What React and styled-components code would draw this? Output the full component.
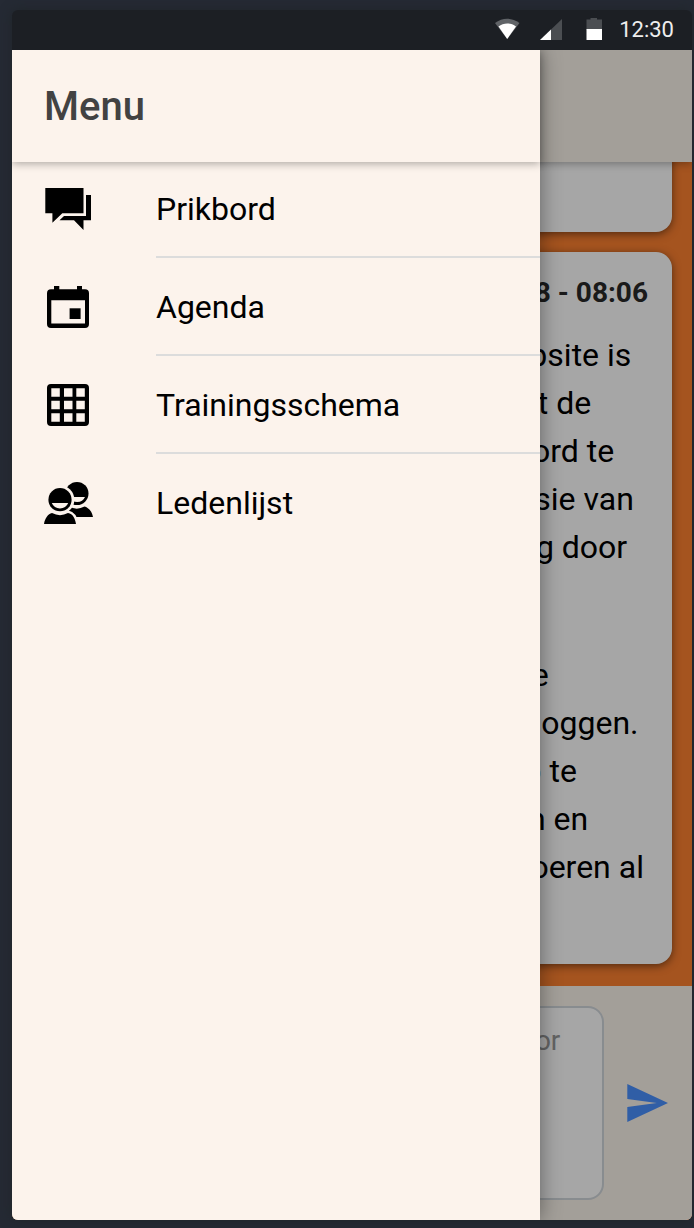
import React from "react";
import styled, { createGlobalStyle } from "styled-components";

const GlobalStyle = createGlobalStyle`
  *, *::before, *::after { box-sizing: border-box; }
  body {
    margin: 0;
    background: #252a34;
    font-family: Roboto, "Liberation Sans", sans-serif;
    color: #000;
  }
`;

const Page = styled.div`
  display: flex;
  height: 100vh;
  padding: 10px 2px 8px 12px;
`;

const Phone = styled.div`
  flex: 1;
  min-width: 0;
  display: flex;
  flex-direction: column;
  overflow: hidden;
  border-radius: 6px;
  box-shadow: 0 0 12px rgba(30, 36, 38, 0.8);
`;

const StatusBar = styled.header`
  flex: none;
  display: flex;
  align-items: center;
  justify-content: flex-end;
  height: 40px;
  padding-right: 18px;
  background: #1c1f24;
  color: #eee;
  font-size: 22px;
  line-height: 40px;
`;

const StatusIcons = styled.svg`
  margin-right: 16px;
`;

const Screen = styled.div`
  position: relative;
  flex: 1;
  min-height: 0;
  display: flex;
  flex-direction: column;
  overflow: hidden;
  background: #fd8130;
`;

const AppBar = styled.div`
  flex: none;
  display: flex;
  align-items: center;
  position: relative;
  z-index: 1;
  height: 112px;
  padding: 2px 32px 0;
  background: ${(p) => p.$color};
  box-shadow: 0 2px 8px rgba(0, 0, 0, 0.3);
`;

const Title = styled.h1`
  margin: 0;
  font-size: 40px;
  font-weight: 500;
  line-height: 48px;
  color: #424242;
`;

const Feed = styled.main`
  flex: 1;
  min-height: 0;
  display: flex;
  flex-direction: column;
  justify-content: flex-end;
  gap: 20px;
  padding: 0 20px 22px;
  overflow: hidden;
`;

const Card = styled.article`
  flex: none;
  display: flex;
  flex-direction: column;
  gap: 21px;
  padding: 24px 24px 25px;
  border-radius: 16px;
  background: #fff;
  box-shadow: 0 2px 8px rgba(0, 0, 0, 0.5);
`;

const CardDate = styled.time`
  font-size: 28px;
  font-weight: 700;
  line-height: 34px;
  text-align: right;
  color: #282828;
`;

const CardText = styled.div`
  display: flex;
  flex-direction: column;
  gap: 32px;
  font-size: 32px;
  line-height: 48px;
`;

const Paragraph = styled.p`
  margin: 0;
  white-space: pre;
`;

const Composer = styled.form`
  flex: none;
  display: flex;
  align-items: center;
  gap: 22px;
  padding: 20px 24px 20px 20px;
  background: #fbf4eb;
`;

const MessageBox = styled.textarea`
  flex: 1;
  min-width: 0;
  height: 194px;
  padding: 16px 24px;
  border: 2px solid #d2d7dc;
  border-radius: 16px;
  background: #fff;
  resize: none;
  overflow: hidden;
  font-family: inherit;
  font-size: 28px;
  line-height: 34px;

  &::placeholder {
    color: #999;
    opacity: 1;
  }
`;

const SendButton = styled.button`
  flex: none;
  display: flex;
  padding: 0;
  border: 0;
  background: none;
  color: #4b91ff;
  cursor: pointer;
`;

const Scrim = styled.div`
  position: absolute;
  inset: 0;
  z-index: 2;
  background: rgba(0, 0, 0, 0.35);
`;

const Drawer = styled.aside`
  position: absolute;
  top: 0;
  bottom: 0;
  left: 0;
  z-index: 3;
  width: 528px;
  max-width: 100%;
  background: #fcf3ec;
  box-shadow: 0 0 20px rgba(0, 0, 0, 0.42);
`;

const MenuList = styled.ul`
  margin: -2px 0 0;
  padding: 0;
  list-style: none;
`;

const MenuLink = styled.a`
  display: flex;
  align-items: center;
  gap: 60px;
  padding-left: 28px;
  color: #000;
  font-size: 32px;
  line-height: 98px;
  text-decoration: none;

  svg {
    flex: none;
  }
`;

const MenuLabel = styled.span`
  flex: 1;
  box-shadow: inset 0 -2px #dcdcdc;

  li:last-child & {
    box-shadow: none;
  }
`;

const ChatIcon = () => (
  <svg width="56" height="56" viewBox="0 0 56 56" aria-hidden="true">
    <path d="M5.3 7H43.5V32.2H22.3L12.4 41.7V32.2H5.3Z" />
    <path d="M46 14H51V39.2H43.5V49L34 39.2H19.5L24 35H46Z" />
  </svg>
);

const CalendarIcon = () => (
  <svg width="56" height="56" viewBox="0 0 56 56" aria-hidden="true">
    <path
      fillRule="evenodd"
      d="M14 7h5.300v3.300h17.700v-3.300h5v3.300h3a4 4 0 0 1 4 4v30.700a4 4 0 0 1-4 4H11a4 4 0 0 1-4-4V14.300a4 4 0 0 1 4-4h3zM11.300 21.200V44.500H45V21.200z"
    />
    <path d="M29.600 29.300h11v10.700H29.600z" />
  </svg>
);

const GridIcon = () => (
  <svg width="56" height="56" viewBox="0 0 56 56" aria-hidden="true">
    <path
      fillRule="evenodd"
      d="M11 7H45a4 4 0 0 1 4 4V45a4 4 0 0 1-4 4H11a4 4 0 0 1-4-4V11a4 4 0 0 1 4-4z
      M11.300 11.300v8.500h8.500v-8.500z M24 11.300v8.500h8.500v-8.500z M36.300 11.300v8.500h8.500v-8.500z
      M11.300 23.800v8.500h8.500v-8.500z M24 23.800v8.500h8.500v-8.500z M36.300 23.800v8.500h8.500v-8.500z
      M11.300 36.300v8.500h8.500v-8.500z M24 36.300v8.500h8.500v-8.500z M36.300 36.300v8.500h8.500v-8.500z"
    />
  </svg>
);

const PeopleIcon = () => (
  <svg width="56" height="56" viewBox="0 0 56 56" aria-hidden="true">
    <circle cx="37" cy="18.500" r="11.500" />
    <path fill="#fcf3ec" d="M29.500 22H45a8.500 8.500 0 0 1-15.500 0z" />
    <path d="M29 31.500a16 16 0 0 0 15.500 0C49.500 33 52 37 53 42H29z" />
    <circle cx="20" cy="24.700" r="14.300" fill="#fcf3ec" />
    <path
      stroke="#fcf3ec"
      strokeWidth="5"
      fill="#fcf3ec"
      d="M4 49c1-6 4-10 8-11a17 17 0 0 0 16 0c5 1 7 5 8 11z"
    />
    <circle cx="20" cy="24.700" r="11.600" />
    <path fill="#fcf3ec" d="M11.800 28H28.200a8.900 8.900 0 0 1-16.400 0z" />
    <path d="M4 49c1-6 4-10 8-11a17 17 0 0 0 16 0c5 1 7 5 8 11z" />
  </svg>
);

const menuItems = [
  { label: "Prikbord", Icon: ChatIcon },
  { label: "Agenda", Icon: CalendarIcon },
  { label: "Trainingsschema", Icon: GridIcon },
  { label: "Ledenlijst", Icon: PeopleIcon },
];

const posts = [
  { id: 1, paragraphs: ["Top!"] },
  {
    id: 2,
    date: "13-01-2018 - 08:06",
    paragraphs: [
      `Beste leden en ouders, de clubwebsite is
aangepast. Via de knop menu gaat de
keuzelijst open, om daar het prikbord te
bekijken. Dit is nu de nieuwste versie van
de website, die nu deze maand nog door
ons getest wordt.`,
      `Een aantal leden kreeg vandaag de
melding dat ze nog niet konden inloggen.
Probeer toch jouw wachtwoord op te
vragen, direct opnieuw in te stellen en
daarna de gegevens verder in te voeren al
is het even zoeken.`,
    ],
  },
];

export default function App() {
  return (
    <>
      <GlobalStyle />
      <Page>
        <Phone>
          <StatusBar>
            <StatusIcons width="108" height="24" viewBox="0 0 108 24" aria-hidden="true">
              <path fill="#606367" d="M0 5C7.500-.7 16.500-.7 24.500 5L12.200 21z" />
              <path fill="#fff" d="M3.500 8.500c5-4 12.500-4 17.500 0L12.200 21z" />
              <path fill="#4b4e52" d="M67 1V22H45z" />
              <path fill="#fff" d="M56 11.500V22H45z" />
              <path fill="#4b4e52" d="M95.500 0h6.500v1.500h5V12H91.500V1.500h4z" />
              <path fill="#fff" d="M91.500 11H107V22H91.500z" />
            </StatusIcons>
            <span>12:30</span>
          </StatusBar>
          <Screen>
            <AppBar $color="#fbf4eb" />
            <Feed>
              {posts.map((post) => (
                <Card key={post.id}>
                  {post.date && <CardDate>{post.date}</CardDate>}
                  <CardText>
                    {post.paragraphs.map((text) => (
                      <Paragraph key={text}>{text}</Paragraph>
                    ))}
                  </CardText>
                </Card>
              ))}
            </Feed>
            <Composer>
              <MessageBox
                aria-label="Bericht"
                placeholder="Geef hier een nieuw prikbordbericht voor alle leden"
              />
              <SendButton type="button" aria-label="Versturen">
                <svg width="42" height="38" viewBox="0 0 42 38" fill="currentColor" aria-hidden="true">
                  <path d="M1.300 0L42 19L1.300 38V23L30.700 19L1.300 15z" />
                </svg>
              </SendButton>
            </Composer>
            <Scrim />
            <Drawer>
              <AppBar $color="#fcf3ec">
                <Title>Menu</Title>
              </AppBar>
              <nav aria-label="Menu">
                <MenuList>
                  {menuItems.map(({ label, Icon }) => (
                    <li key={label}>
                      <MenuLink href="#">
                        <Icon />
                        <MenuLabel>{label}</MenuLabel>
                      </MenuLink>
                    </li>
                  ))}
                </MenuList>
              </nav>
            </Drawer>
          </Screen>
        </Phone>
      </Page>
    </>
  );
}
